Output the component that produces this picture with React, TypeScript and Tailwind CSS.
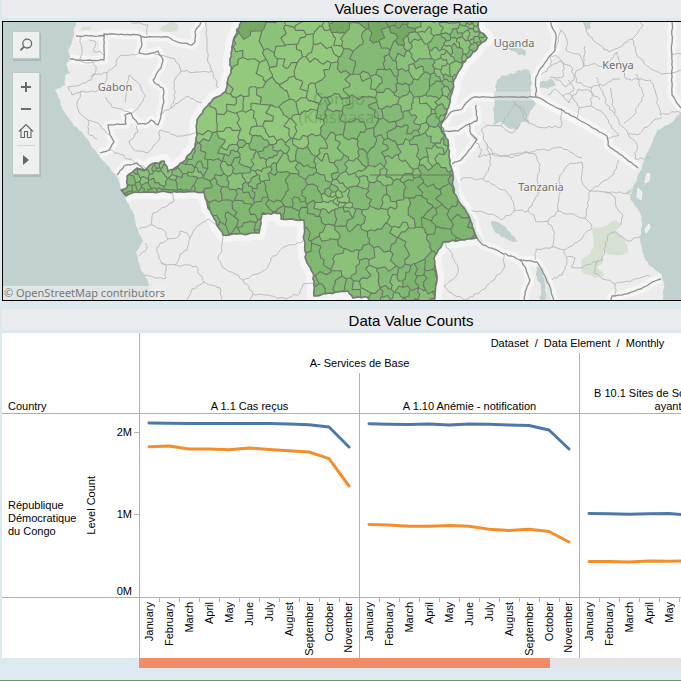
import React from "react";

type Point = [number, number];

const parse = (s: string): Point[] =>
  s.trim().split(/\s+/).map((p) => p.split(",").map(Number) as Point);

const noise = (a: number, b: number, c = 0) => {
  const v = Math.sin(a * 12.9898 + b * 78.233 + c * 37.719) * 43758.5453;
  return v - Math.floor(v);
};

/* Breaks a straight segment into an irregular one; both directions give the same shape. */
function jag(a: Point, b: Point, amount: number): Point[] {
  const swap = a[0] > b[0] || (a[0] === b[0] && a[1] > b[1]);
  const [p, q] = swap ? [b, a] : [a, b];
  const len = Math.hypot(q[0] - p[0], q[1] - p[1]);
  const n = Math.max(1, Math.round(len / 3));
  const out: Point[] = [];
  for (let i = 1; i < n; i++) {
    const t = i / n;
    const d = (noise(Math.round(p[0] * 4), Math.round(q[1] * 4), i) - 0.5) * 2 * amount;
    out.push([
      p[0] + (q[0] - p[0]) * t + (-(q[1] - p[1]) / len) * d,
      p[1] + (q[1] - p[1]) * t + ((q[0] - p[0]) / len) * d,
    ]);
  }
  return swap ? out.reverse() : out;
}

const join = (points: Point[]) =>
  "M" + points.map(([x, y]) => x.toFixed(1) + " " + y.toFixed(1)).join("L");

function toPath(points: Point[], amount: number, closed = false): string {
  const out: Point[] = [];
  const count = closed ? points.length : points.length - 1;
  for (let i = 0; i < count; i++) {
    out.push(points[i], ...jag(points[i], points[(i + 1) % points.length], amount));
  }
  if (!closed) out.push(points[points.length - 1]);
  return join(out) + (closed ? "Z" : "");
}

/* Typical distance between neighbouring health zones. */
function spacing(x: number, y: number): number {
  if (x < 200 && y > 150) return 8;
  if (Math.hypot(x - 338, y - 200) < 13) return 5;
  if (x > 462 && y < 60) return 6;
  if (x > 432 && y < 150) return 8;
  if (x > 325 && x < 345 && y < 38) return 8;
  if (x > 225 && x < 275 && y > 148 && y < 195) return 10;
  if (y > 275 && x > 375) return 9;
  if (x > 400 && y < 70) return 11;
  if (x > 385 && y < 175) return 13;
  if (y > 215 && x > 300) return 17;
  if (y > 175 && x > 300) return 13;
  if (y > 140) return 13;
  return 16;
}

const CONGO = parse(
  "241,15 241,22 234,38 230,62 231,70 227,83 225,92 213,99 205,108 197,120 197,135 195,147 191,153 183,162 168,172 164,161 150,165 145,170 137,168 127,176 127,188 121,190 126,196 135,192 204,192 208,208 223,235 259,233 262,214 280,213 281,219 304,220 304,240 306,260 313,273 314,296 323,294 348,291 353,298 367,297 373,305 434,305 437,280 434,258 443,242 477,238 467,213 454,193 452,170 449,157 448,140 441,127 447,110 452,93 454,80 463,63 487,38 479,30 478,15",
);

function scatter(tries: number, seed: number, scale: number): Point[] {
  const sites: Point[] = [];
  for (let i = 0; i < tries; i++) {
    const x = 112 + noise(i, 1, seed) * 385;
    const y = 12 + noise(i, 2, seed + 5) * 300;
    const r = spacing(x, y) * scale;
    if (sites.every(([a, b]) => Math.abs(a - x) >= r || Math.hypot(a - x, b - y) >= r)) {
      sites.push([x, y]);
    }
  }
  return sites;
}

function zoneFill(x: number, y: number, v: number): string {
  if (y < 36 && (x < 282 || (x > 328 && x < 405))) return "#76aa62";
  if (y < 145 && x < 345 - y * 0.2) return v > 0.12 ? "#93c97c" : "#8cc37a";
  if (y > 175 && x > 405) return v > 0.8 ? "#88bf77" : "#7eb56f";
  if (y > 182 && x < 320) return "#80b871";
  if (Math.hypot(x - 338, y - 200) < 10) return "#93c97c";
  if (x > 415) return v > 0.35 ? "#8cc57a" : "#83ba75";
  return v > 0.55 ? "#8bc279" : "#83ba75";
}

/* Small cells gathered round a coarser set of centres give zones of uneven size and outline. */
function buildZones() {
  const centres = scatter(9000, 3, 0.95);
  const sites = scatter(14000, 7, 0.36);
  const owner = sites.map(([x, y], i) => {
    const r = spacing(x, y);
    let best = 0;
    let least = Infinity;
    centres.forEach(([a, b], k) => {
      const d = Math.hypot(a - x, b - y) + noise(i, k, 4) * r * 0.16 - noise(k, 11) * r * 0.75;
      if (d < least) {
        least = d;
        best = k;
      }
    });
    return best;
  });
  const fills: string[] = centres.map(() => "");
  let edges = "";
  sites.forEach((s, index) => {
    let cell: { p: Point; n: number }[] = [
      { p: [s[0] - 14, s[1] - 14], n: -1 },
      { p: [s[0] + 14, s[1] - 14], n: -1 },
      { p: [s[0] + 14, s[1] + 14], n: -1 },
      { p: [s[0] - 14, s[1] + 14], n: -1 },
    ];
    sites.forEach((o, k) => {
      const dx = o[0] - s[0];
      const dy = o[1] - s[1];
      if (k === index || Math.abs(dx) > 28 || Math.abs(dy) > 28) return;
      const c = (o[0] * o[0] + o[1] * o[1] - s[0] * s[0] - s[1] * s[1]) / 2;
      const next: { p: Point; n: number }[] = [];
      cell.forEach((a, i) => {
        const b = cell[(i + 1) % cell.length];
        const da = a.p[0] * dx + a.p[1] * dy - c;
        const db = b.p[0] * dx + b.p[1] * dy - c;
        if (da <= 0) next.push(a);
        if (da <= 0 !== db <= 0) {
          const t = da / (da - db);
          const p: Point = [a.p[0] + (b.p[0] - a.p[0]) * t, a.p[1] + (b.p[1] - a.p[1]) * t];
          next.push({ p, n: da <= 0 ? k : a.n });
        }
      });
      cell = next;
    });
    fills[owner[index]] += join(cell.map((c) => c.p)) + "Z";
    cell.forEach((c, i) => {
      if (c.n > index && owner[c.n] !== owner[index]) {
        edges += join([c.p, cell[(i + 1) % cell.length].p]);
      }
    });
  });
  return {
    edges,
    zones: centres.map(([x, y], i) => ({ d: fills[i], fill: zoneFill(x, y, noise(i, 9)) })),
  };
}

const { zones: ZONES, edges: ZONE_EDGES } = buildZones();

const WEST_OCEAN = parse(
  "0,15 77,15 76,22 74,33 72,42 68,50 70,58 66,64 70,73 65,75 65,85 60,88 55,90 58,97 62,107 68,117 74,126 82,132 90,143 97,153 107,165 117,177 120,184 121,190 126,200 133,213 138,230 143,242 136,252 140,267 146,278 150,290 150,305 0,305",
);
const EAST_OCEAN = parse(
  "900,108 681,113 668,125 657,130 650,147 642,167 635,183 630,198 640,213 642,223 640,240 645,260 655,270 662,275 664,283 662,305 900,305",
);
const LAKES = [
  "497,80 502,75 513,74 518,70 529,70 531,80 531,99 536,104 530,112 526,118 530,124 522,122 518,130 508,128 502,122 493,125 494,115 494,96",
  "508,48 516,47 526,51 525,56 518,55",
  "583,15 590,15 591,28 586,30",
  "491,221 498,222 510,232 518,242 512,242 501,237 494,230",
  "536,267 541,270 545,285 545,300 540,300 541,288 536,275",
  "540,82 552,79 556,85 548,89 540,88",
].map(parse);
const RIFT_LAKES = [
  "453,172 459,184 459,195 466,207 475,219 477,232 484,242 479,243 474,230 465,212 455,197 453,188",
  "537,262 543,267 549,280 551,300 541,300 540,280",
].map(parse);
const PARKS = [
  "592,229 605,226 615,220 621,225 616,232 624,238 628,248 628,254 609,255 603,250 603,262 597,268 603,272 604,277 595,278 581,271 581,261 590,254 594,245",
  "158,29 170,22 178,24 177,31 168,32",
  "82,27 92,26 90,30 81,31",
  "627,190 632,188 631,196 627,195",
].map(parse);

const BORDERS = [
  "76,36 104,36 104,34 139,35 143,37 168,37 175,41 192,45 195,42 195,32 201,22 203,15",
  "104,34 104,60 80,60 70,59",
  "140,35 142,44 139,53 148,54 158,51 163,60 161,68 153,80 156,84 163,88 164,102 161,115 158,125 151,120 146,124 138,124 133,118 131,113 125,115 126,124 108,125 110,135 114,142 109,150 100,153",
  "117,175 124,166 137,163 145,170",
  "552,15 551,24 556,35 555,50 547,60 541,68 536,77 536,97 540,98 607,136 608,145 638,168",
  "536,97 474,97 466,103 462,109 451,112 441,124 444,131 458,131 469,124 477,121 476,105",
  "469,124 471,134 477,139 469,150 461,160 452,164",
  "477,238 483,245 500,252 520,260 537,262 545,276 551,290 554,303",
  "520,260 526,269 530,280 525,292 524,303",
  "672,22 672,95 681,108",
  "610,303 612,296 625,294 641,289 655,281 661,279",
].map(parse);

const REGIONS = [
  "75,60 83,62 93,62 96,70 91,80 80,85 68,87 72,95 82,91 95,92 105,85 107,73 114,67 121,55 138,54",
  "107,73 93,74 91,77",
  "80,36 82,50 80,59",
  "89,40 96,42 94,52 100,51 104,55",
  "106,97 112,107 122,109 131,114 138,108 146,96 140,85 129,75 127,83 125,102",
  "82,91 77,105 79,112 88,120 98,123 109,135",
  "88,120 88,133 97,139",
  "153,53 165,56 175,59 181,71 174,82 175,98 171,108 160,114",
  "181,71 196,72 212,71 218,88",
  "206,22 207,45 208,62 212,71",
  "171,108 188,96 202,103",
  "160,130 160,137 148,153 133,149 129,141 138,132 136,125",
  "160,130 180,136 195,133",
  "109,150 118,153 128,159 145,168",
  "131,22 148,25 147,35",
  "173,193 174,201 165,207 153,213 152,225 139,229",
  "152,225 164,230 168,239 160,243 157,250 161,263 175,265 180,254 187,250 190,238 195,229 208,219 215,224",
  "168,239 178,237 180,231 187,233 190,238",
  "139,256 147,248 145,243",
  "161,263 166,266 166,278 155,278 145,275",
  "175,265 196,266 204,282 192,289 187,300",
  "204,282 220,288 221,300",
  "223,235 222,250 218,259 223,268 235,274 243,280 253,294 249,300",
  "243,280 257,274 268,267 271,258 287,246 303,241",
  "253,294 265,295 286,299 300,293 303,284 313,283",
  "443,242 449,249 458,267 457,275 444,286 452,293 465,300",
  "465,300 480,292 494,280 505,266 503,253",
  "489,152 491,165 483,179 463,178 460,180",
  "483,179 499,189 507,192 513,201 514,211 501,220 496,216 480,211 471,210",
  "489,154 505,155 520,153 535,154 540,165 537,180 538,195 528,211 514,211",
  "528,211 534,215 536,222 548,221 558,211 560,175 571,163 582,162 582,182 590,191 585,218",
  "548,221 555,233 552,247 536,249 535,260",
  "558,211 575,215 585,218 592,227 580,240 564,250 552,247",
  "590,191 605,192 615,197 616,207 623,215 621,225",
  "590,191 600,184 614,174 618,160",
  "605,192 628,193 631,191",
  "564,250 567,264 562,275 552,280",
  "567,257 575,258 571,267 580,268 602,260 608,235 616,232 628,241 640,237",
  "598,260 594,273 615,284 650,276",
  "615,284 615,297",
  "489,152 485,142 481,130 489,125 501,126 515,103 520,108 524,119 537,127 561,127 561,108",
  "513,101 524,109 527,119",
  "501,126 512,133 520,125",
  "485,142 495,156 512,158 523,153 540,150 550,150 558,147 570,152 582,158",
  "555,50 561,30 567,40 566,50 580,55 584,66",
  "583,22 588,34 598,44 609,52 620,47 632,39 643,25 640,20",
  "632,39 636,53 649,67 662,74 681,70",
  "584,66 592,64 605,67 617,52 626,79 650,80 655,90 660,115",
  "585,46 584,66 575,73 576,82 592,87 606,84 613,79 620,79",
  "611,88 612,105 619,123 628,134 638,135 652,122 662,117",
  "592,87 591,106 579,108 569,93",
  "579,108 577,119",
  "591,106 603,113 612,128 619,135 607,138",
  "628,134 637,144 635,159 650,158",
  "541,75 551,66 550,55 558,57 564,63 563,77 550,77",
  "551,66 560,61 571,66 574,80 566,87 554,77",
  "548,95 555,89 563,96 574,90 568,80",
  "563,96 569,103 578,89 590,91 600,100",
  "596,77 603,92 607,105 614,113",
  "660,115 675,112 681,113",
  "672,54 681,54",
  "636,74 644,95 634,115 624,123",
  "471,134 482,150 478,157 489,154",
].map(parse);

const CONGO_PATH = toPath(CONGO, 0.8, true);

function CoverageMap() {
  return (
    <svg
      className="block h-[278px] w-full"
      viewBox="3 22 817 278"
      preserveAspectRatio="xMinYMin slice"
      role="img"
      aria-label="Map of values coverage ratio"
      fontFamily="'Noto Sans', 'Open Sans', sans-serif"
      strokeLinejoin="round"
    >
      <defs>
        <clipPath id="congo">
          <path d={CONGO_PATH} />
        </clipPath>
      </defs>
      <rect x="0" y="0" width="900" height="320" fill="#ececec" />
      {PARKS.map((p, i) => (
        <path key={i} d={toPath(p, 1, true)} fill="#d6e1d2" />
      ))}
      <g stroke="#f7f7f7" fill="none" opacity="0.85">
        {BORDERS.map((p, i) => (
          <path key={i} d={toPath(p, 0.5)} strokeWidth="9" />
        ))}
        <path d={CONGO_PATH} strokeWidth="14" />
      </g>
      {RIFT_LAKES.map((p, i) => (
        <path key={i} d={toPath(p, 0.5, true)} fill="#dfe8e7" />
      ))}
      <g fill="#c0d1d0">
        <path d={toPath(WEST_OCEAN, 0.8, true)} />
        <path d={toPath(EAST_OCEAN, 0.8, true)} />
        {LAKES.map((p, i) => (
          <path key={i} d={toPath(p, 1.2, true)} />
        ))}
      </g>
      <g fill="#ececec" stroke="#f5f5f5">
        <path d="M647 173l3 1-1 7-4 2 1-5zM638 188l4 4-1 8-4-3zM649 224l1 4-4 5-1-4z" />
      </g>
      <path d="M494 96H531" stroke="#d4dfde" strokeWidth="9" />
      <path d="M537 99L607 138" stroke="#f7f7f7" strokeWidth="7" />
      <g stroke="#b5b7b7" fill="none" strokeWidth="0.9">
        {REGIONS.map((p, i) => (
          <path key={i} d={toPath(p, 1.2)} />
        ))}
      </g>
      <g stroke="#8e8f8f" fill="none" strokeWidth="1.3">
        {BORDERS.map((p, i) => (
          <path key={i} d={toPath(p, 0.6)} />
        ))}
      </g>
      <g clipPath="url(#congo)">
        {ZONES.map((z, i) => (
          <path key={i} d={z.d} fill={z.fill} stroke={z.fill} strokeWidth="0.6" />
        ))}
        <path d={ZONE_EDGES} fill="none" stroke="#687564" strokeWidth="1.1" strokeLinecap="round" />
        <path d="M370 175H452" fill="none" stroke="#687564" />
      </g>
      <path d={CONGO_PATH} fill="none" stroke="#737873" strokeWidth="1.6" />
      <g textAnchor="middle" fill="#4e7a47" fillOpacity="0.35" fontSize="17">
        <text x="339" y="105">Congo</text>
        <text x="339" y="123">(Kinshasa)</text>
      </g>
      <g
        textAnchor="middle"
        fill="#6c6e6e"
        fontSize="11"
        stroke="#f2f2f2"
        strokeWidth="2"
        paintOrder="stroke"
      >
        <text x="115" y="91">Gabon</text>
        <text x="514" y="47">Uganda</text>
        <text x="618" y="69">Kenya</text>
        <text x="541" y="191">Tanzania</text>
      </g>
    </svg>
  );
}

const MAP_BOX = "border border-[#c3c8c8] bg-[#eeefef] shadow-[1px_2px_0_#aebbba]";
const MAP_BUTTON = "flex w-full items-center justify-center text-[#666]";

function MapControls() {
  return (
    <div className="absolute left-[9px] top-[9px] flex w-7 flex-col gap-[13px]">
      <div className={MAP_BOX}>
        <button type="button" aria-label="Search" className={`${MAP_BUTTON} h-[26px]`}>
          <svg className="size-4" viewBox="0 0 16 16" fill="none" stroke="currentColor" strokeWidth="1.3">
            <circle cx="9.2" cy="6.6" r="4.4" />
            <path d="M6 9.8L2.4 13.4" strokeWidth="1.7" />
          </svg>
        </button>
      </div>
      <div className={MAP_BOX}>
        <button type="button" aria-label="Zoom in" className={`${MAP_BUTTON} h-7`}>
          <svg className="size-4" viewBox="0 0 16 16" stroke="currentColor" strokeWidth="1.9">
            <path d="M8 3v10M3 8h10" />
          </svg>
        </button>
        <button type="button" aria-label="Zoom out" className={`${MAP_BUTTON} h-4`}>
          <svg className="size-4" viewBox="0 0 16 16" stroke="currentColor" strokeWidth="1.9">
            <path d="M3 8h10" />
          </svg>
        </button>
        <button type="button" aria-label="Reset view" className={`${MAP_BUTTON} h-7`}>
          <svg className="size-4" viewBox="0 0 16 16" fill="none" stroke="currentColor" strokeWidth="1.1">
            <path d="M1 8.5L8 1.5L15 8.5M3 7v7.5h3.5V8.5h3v6H13V7" />
          </svg>
        </button>
        <div className="mx-1 border-t border-[#d3d5d5]" />
        <button type="button" aria-label="Show map tools" className={`${MAP_BUTTON} h-7`}>
          <svg className="size-4" viewBox="0 0 16 16" fill="currentColor">
            <path d="M5 3l6 5-6 5z" />
          </svg>
        </button>
      </div>
    </div>
  );
}

const MONTHS = [
  "January", "February", "March", "April", "May", "June",
  "July", "August", "September", "October", "November",
];

/* Heights are measured from the top of the pane. */
const PANES = [
  {
    name: "A 1.1 Cas reçus",
    blue: [9, 9.3, 9.6, 9.4, 9.4, 9.4, 9.5, 10, 10.7, 13, 33],
    orange: [32.8, 31.9, 35, 35, 35.8, 33.9, 35.5, 36.8, 38, 44.7, 72],
  },
  {
    name: "A 1.10 Anémie - notification",
    blue: [9.8, 10.3, 10.4, 10, 10.9, 10, 10.3, 10.9, 11.5, 16, 35],
    orange: [110.4, 111, 112.2, 112.3, 111.6, 112.2, 115.2, 116.4, 115.3, 117.5, 128],
  },
  {
    name: "B 10.1 Sites de Soins Communautaires ayant rapporté",
    blue: [99.5, 99.8, 100.2, 99.8, 99.6, 101, 101, 101, 102, 105, 114],
    orange: [147.6, 147.5, 148.1, 147, 147.3, 147, 147, 148, 148, 149, 154],
  },
];

const line = (values: number[]) => values.map((v, i) => `${9 + i * 20},${v}`).join(" ");

function PaneChart({ pane }: { pane: (typeof PANES)[number] }) {
  return (
    <svg
      className="block h-[183px] w-[219px]"
      viewBox="0 0 219 183"
      fill="none"
      strokeWidth="3"
      strokeLinecap="round"
      strokeLinejoin="round"
      role="img"
      aria-label={pane.name}
    >
      <polyline points={line(pane.blue)} stroke="#4e79a7" />
      <polyline points={line(pane.orange)} stroke="#f28e2b" />
    </svg>
  );
}

function MonthAxis() {
  return (
    <div className="flex h-[60px]">
      {MONTHS.map((m) => (
        <div key={m} className="relative flex w-5 justify-center pr-0.5 pt-1 last:w-[19px]">
          <span className="rotate-180 self-start leading-[13px] [writing-mode:vertical-rl]">{m}</span>
          {m !== "November" && <i className="absolute right-0 top-0 h-1 w-px bg-[#b0b0b0]" />}
        </div>
      ))}
    </div>
  );
}

function Title({ children, className }: { children: React.ReactNode; className: string }) {
  return (
    <h2 className={`bg-[#ebecf0] text-center text-[15px] ${className}`}>{children}</h2>
  );
}

const RULE = "border-[#b0b0b0]";

export default function App() {
  return (
    <main className="overflow-hidden bg-[#dce9ee] font-['Liberation_Sans',Arial,sans-serif] text-[11px] leading-[13px] text-black">
      <div className="min-w-[820px] pl-[2px]">
        <Title className="h-[18px] leading-[18px]">Values Coverage Ratio</Title>
        <section className="relative mt-[3px] border border-black">
          <CoverageMap />
          <MapControls />
          <a
            href="#copyright"
            className="absolute bottom-0 left-0 bg-[#eef0f0]/70 px-px font-['Noto_Sans','Open_Sans',sans-serif] text-[11px] leading-[14px] text-[#777]"
          >
            © OpenStreetMap contributors
          </a>
        </section>

        <Title className="mt-2 h-[21px] leading-6">Data Value Counts</Title>
        <section className="mt-[3px] flex bg-white">
          <div className="w-[137px] shrink-0">
            <div className={`flex h-[81px] items-end border-b pl-[6px] ${RULE}`}>Country</div>
            <div className={`flex h-[184px] border-b ${RULE}`}>
              <div className="flex w-[82px] items-center pl-[6px] pt-[26px]">République Démocratique du Congo</div>
              <div className="flex w-[14px] items-center justify-center">
                <span className="rotate-180 whitespace-nowrap [writing-mode:vertical-rl]">Level Count</span>
              </div>
              <div className="flex flex-1 flex-col items-end pt-3">
                <div className="flex items-center gap-[2px]">
                  2M<i className="h-px w-[5px] bg-[#b0b0b0]" />
                </div>
                <div className="mt-[69px] flex items-center gap-[2px]">
                  1M<i className="h-px w-[5px] bg-[#b0b0b0]" />
                </div>
                <div className="mt-16 pr-[7px]">0M</div>
              </div>
            </div>
          </div>

          <div className={`min-w-0 flex-1 overflow-hidden border-l ${RULE}`}>
            <div className="w-[875px] whitespace-pre pt-1 text-center">
              <div className="h-4">Dataset  /  Data Element  /  Monthly</div>
            </div>
            <div className="flex w-[875px] text-center">
              <div className="w-[439px]">
                <div className="h-5 pt-1">A- Services de Base</div>
                <div className={`flex h-[41px] items-end border-b ${RULE}`}>
                  <div className="w-[219px]">{PANES[0].name}</div>
                  <div className={`flex h-10 flex-1 items-end justify-center border-l ${RULE}`}>{PANES[1].name}</div>
                </div>
              </div>
              <div className={`flex h-[61px] flex-1 items-end border-b border-l ${RULE}`}>
                <div className="w-[220px] px-2">{PANES[2].name}</div>
              </div>
            </div>
            <div className="flex w-[875px]">
              {PANES.map((p, i) => (
                <div key={p.name} className={i ? `border-l ${RULE}` : ""}>
                  <div className={`border-b ${RULE}`}>
                    <PaneChart pane={p} />
                  </div>
                  <MonthAxis />
                </div>
              ))}
            </div>
          </div>
        </section>
        <div className="ml-[137px] h-[10px] bg-[#e4e4e4]">
          <div className="h-full w-[411px] rounded-r-[1px] bg-[#f08d66]" />
        </div>
        <div className="h-3" />
      </div>
      <div className="h-px bg-[#58a052]" />
    </main>
  );
}
